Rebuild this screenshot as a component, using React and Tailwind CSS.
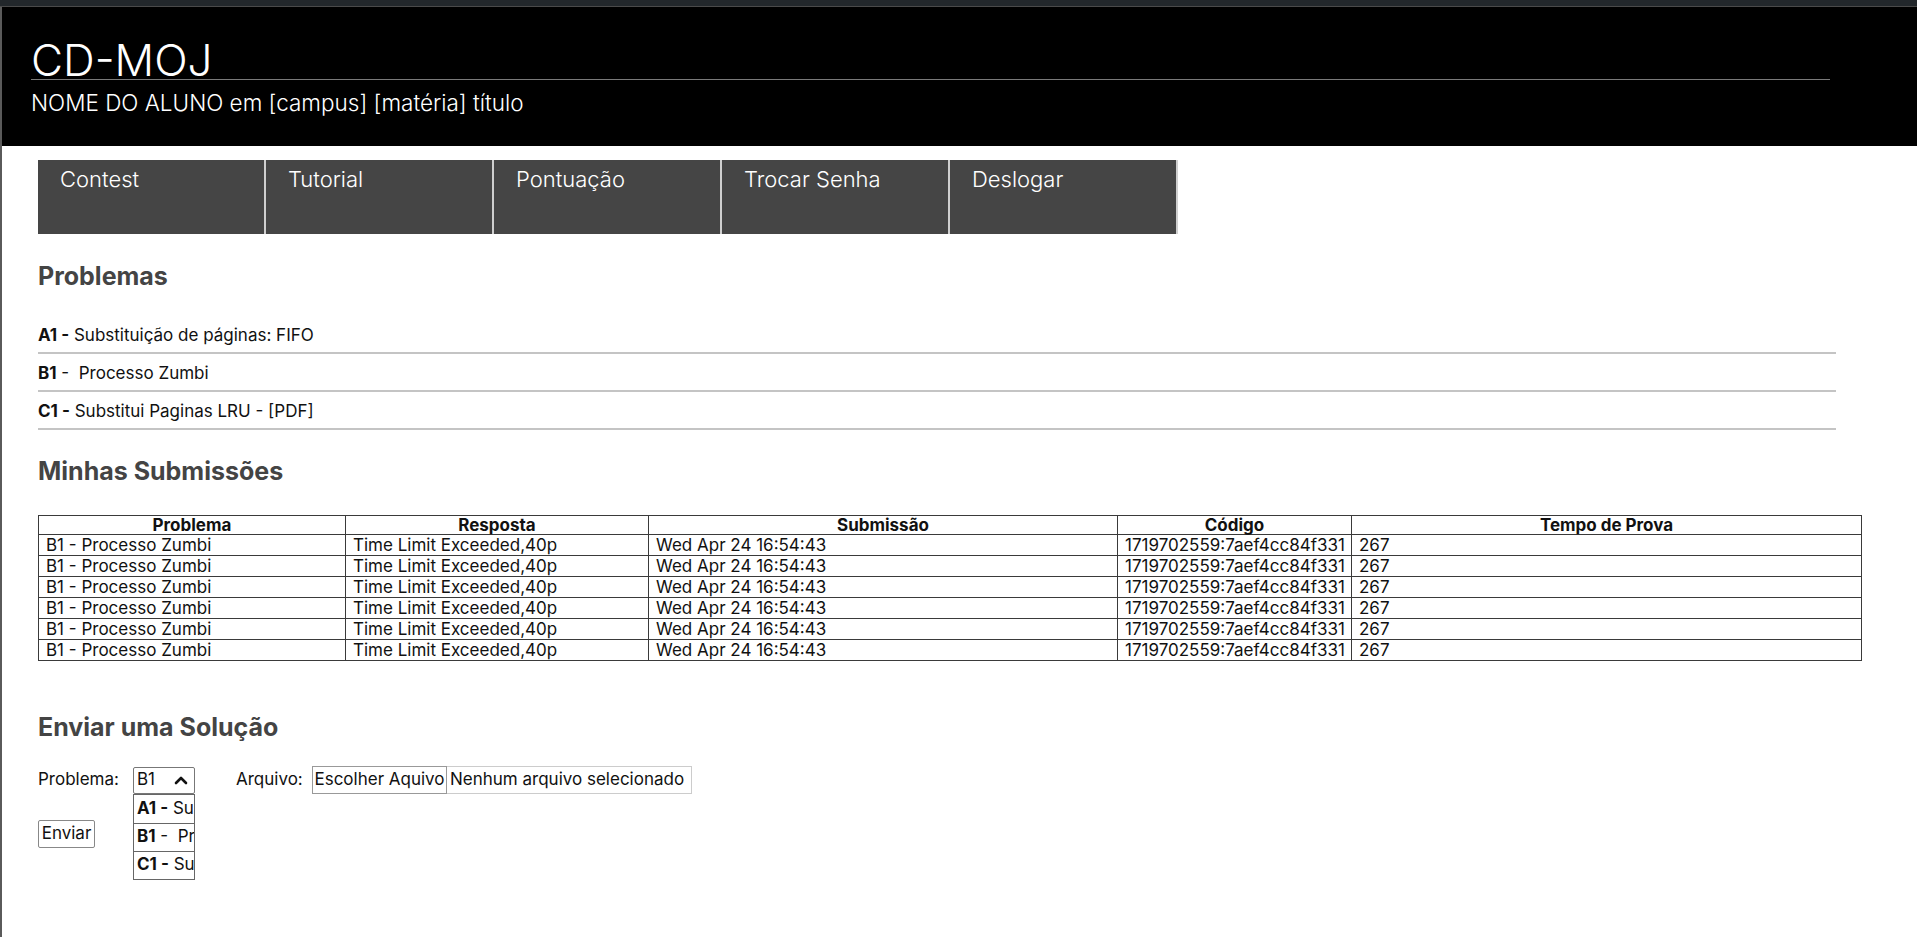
import React from 'react';

const navItems = ['Contest', 'Tutorial', 'Pontuação', 'Trocar Senha', 'Deslogar'];

const problems = [
    { code: 'A1 -', name: ' Substituição de páginas: FIFO' },
    { code: 'B1', name: ' -  Processo Zumbi' },
    { code: 'C1 -', name: ' Substitui Paginas LRU - [PDF]' },
];

const submissions = Array.from({ length: 6 }, () => ({
    problema: 'B1 - Processo Zumbi',
    resposta: 'Time Limit Exceeded,40p',
    submissao: 'Wed Apr 24 16:54:43',
    codigo: '1719702559:7aef4cc84f331',
    tempo: '267',
}));

const ChevronUp = () => (
    <svg width="14" height="10" viewBox="0 0 14 10" fill="none">
        <path d="M2 8 L7 3 L12 8" stroke="#111" strokeWidth="2.6" strokeLinecap="round" strokeLinejoin="round" />
    </svg>
);

const App = () => {
    return (
        <div className="min-h-[937px] bg-white font-['Inter','Liberation_Sans',sans-serif] text-[#111]">
            <div className="h-[7px] bg-[#22272b] border-b border-[#4a4a4a]" />
            <div className="min-h-[930px] border-l-2 border-[#5a5a5a]">
                {/* cabeçalho */}
                <header className="h-[139px] bg-black pl-[29px] pt-[35px] text-white">
                    <div className="w-[1799px] border-b border-[#7a7a7a] text-[44px] font-light leading-[37px]">CD-MOJ</div>
                    <div className="mt-[10px] text-[22.5px] font-light leading-[26px]">NOME DO ALUNO em [campus] [matéria] título</div>
                </header>

                <div className="pl-[36px]">
                    {/* menu */}
                    <nav className="mt-[14px] flex h-[74px] w-[1140px] bg-[#454545]">
                        {navItems.map((item) => (
                            <div key={item} className="w-[228px] border-r-2 border-[#cfcfcf] pl-[22px] pt-[6px] text-[22px] font-light leading-[26px] text-white">
                                {item}
                            </div>
                        ))}
                    </nav>

                    <h2 className="mt-[26px] text-[25px] font-bold leading-[32px] text-[#444]">Problemas</h2>
                    <ul className="mt-[24px] w-[1798px]">
                        {problems.map((p) => (
                            <li key={p.code} className="flex h-[38px] items-center border-b-2 border-[#c4c4c4] pt-[3px] text-[17px]">
                                <span className="font-bold">{p.code}</span>
                                <span className="whitespace-pre">{p.name}</span>
                            </li>
                        ))}
                    </ul>

                    <h2 className="mt-[25px] text-[25px] font-bold leading-[32px] text-[#444]">Minhas Submissões</h2>
                    <table className="mt-[28px] w-[1823px] table-fixed border-collapse text-[17px]">
                        <colgroup>
                            <col className="w-[307px]" />
                            <col className="w-[303px]" />
                            <col className="w-[469px]" />
                            <col className="w-[234px]" />
                            <col className="w-[510px]" />
                        </colgroup>
                        <thead>
                            <tr>
                                {['Problema', 'Resposta', 'Submissão', 'Código', 'Tempo de Prova'].map((h) => (
                                    <th key={h} className="border border-[#3a3a3a] p-0 text-center font-bold leading-[18px]">{h}</th>
                                ))}
                            </tr>
                        </thead>
                        <tbody>
                            {submissions.map((s, i) => (
                                <tr key={i}>
                                    <td className="border border-[#3a3a3a] px-[7px] py-0 leading-[20px]">{s.problema}</td>
                                    <td className="border border-[#3a3a3a] px-[7px] py-0 leading-[20px]">{s.resposta}</td>
                                    <td className="border border-[#3a3a3a] px-[7px] py-0 leading-[20px]">{s.submissao}</td>
                                    <td className="whitespace-nowrap border border-[#3a3a3a] pl-[7px] pr-0 py-0 leading-[20px]">{s.codigo}</td>
                                    <td className="border border-[#3a3a3a] px-[7px] py-0 leading-[20px]">{s.tempo}</td>
                                </tr>
                            ))}
                        </tbody>
                    </table>

                    <h2 className="mt-[50px] text-[25px] font-bold leading-[32px] text-[#444]">Enviar uma Solução</h2>

                    {/* formulário de envio */}
                    <div className="mt-[23px] flex h-[28px] items-center text-[17px]">
                        <span className="w-[95px]">Problema:</span>
                        <div className="relative">
                            <div className="flex h-[27px] w-[62px] items-center justify-between rounded-[2px] border border-[#777] pl-[3px] pr-[6px]">
                                <span>B1</span>
                                <ChevronUp />
                            </div>
                            <div className="absolute left-0 top-[27px] w-[62px] overflow-hidden border border-[#666] bg-white">
                                {problems.map((p, i) => (
                                    <div key={p.code} className={`flex h-[28px] items-center whitespace-nowrap pl-[3px] ${i > 0 ? 'border-t border-[#666]' : ''}`}>
                                        <span className="font-bold">{p.code}</span>
                                        <span className="whitespace-pre">{p.name}</span>
                                    </div>
                                ))}
                            </div>
                        </div>
                        <span className="ml-[41px] w-[76px]">Arquivo:</span>
                        <div className="flex h-[28px]">
                            <button type="button" className="h-[28px] w-[135px] border border-[#999] bg-white text-[17px] whitespace-nowrap">Escolher Aquivo</button>
                            <div className="flex h-[28px] w-[245px] items-center whitespace-nowrap border border-l-0 border-[#ccc] pl-[3px]">Nenhum arquivo selecionado</div>
                        </div>
                    </div>

                    <button type="button" className="mt-[26px] h-[28px] w-[57px] rounded-[2px] border border-[#888] text-[17px]">Enviar</button>
                </div>
            </div>
        </div>
    );
};

export default App;
